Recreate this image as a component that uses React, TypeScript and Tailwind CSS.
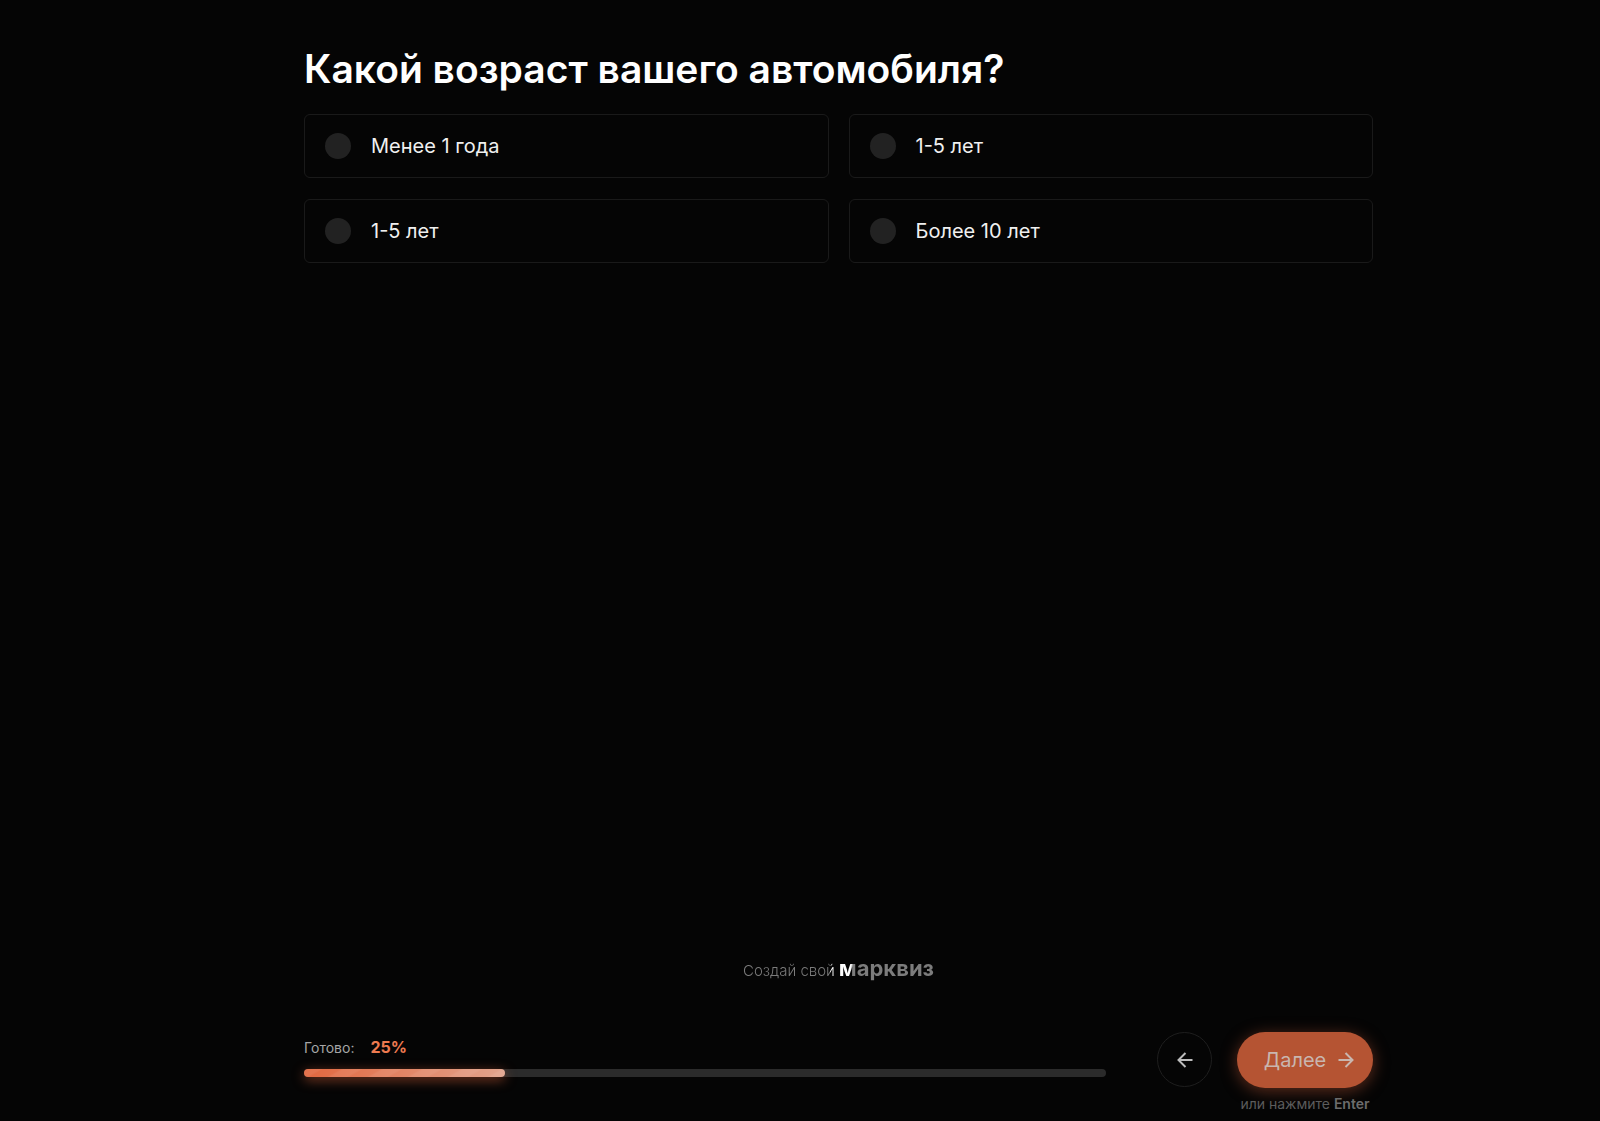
import React, { useState } from 'react';

const options = ['Менее 1 года', '1-5 лет', '1-5 лет', 'Более 10 лет'];

const PROGRESS = 25;

/** One selectable answer: round marker and a caption inside an outlined card. */
const Option: React.FC<{ id: string; text: string; checked: boolean; onSelect: () => void }> = ({ id, text, checked, onSelect }) => (
    <label
        htmlFor={id}
        className="flex h-16 cursor-pointer items-center gap-5 rounded-md border border-[#1a1a1a] px-5 text-xl text-[#f0f0f0]"
    >
        <input
            id={id}
            type="radio"
            name="age"
            checked={checked}
            onChange={onSelect}
            className="size-[26px] shrink-0 cursor-pointer appearance-none rounded-full bg-[#222222] checked:bg-[#ef7b52]"
        />
        <span>{text}</span>
    </label>
);

const App: React.FC = () => {
    const [selected, setSelected] = useState<number | null>(null);

    return (
        <div className="flex min-h-screen flex-col bg-[#050505] pr-[227px] pl-[304px] font-['Inter',sans-serif] text-white">

            {/* Question */}
            <main className="grow pt-11">
                <h1 className="text-[39px] leading-[50px] font-semibold">Какой возраст вашего автомобиля?</h1>
                <div className="mt-5 grid grid-cols-2 gap-x-5 gap-y-[21px]">
                    {options.map((text, i) => (
                        <Option
                            key={i}
                            id={`age-${i}`}
                            text={text}
                            checked={selected === i}
                            onSelect={() => setSelected(i)}
                        />
                    ))}
                </div>
            </main>

            {/* Brand link with a light streak across the letters */}
            <a
                href="#"
                className="flex items-baseline gap-1 self-center bg-[linear-gradient(100deg,#7c7c7c_46%,#ffffff_46%,#ffffff_56%,#7c7c7c_57%)] bg-clip-text leading-8 text-transparent"
            >
                <span className="text-[15px] font-light">Создай свой</span>
                <span className="text-[22px] font-bold">марквиз</span>
            </a>

            {/* Progress and navigation */}
            <footer className="mt-[45px] flex items-start pb-[7px]">
                <div className="grow pt-[3px]">
                    <div className="flex items-baseline gap-4 leading-6">
                        <span id="progress-label" className="text-sm text-[#a6a6a6]">Готово:</span>
                        <span className="text-base font-bold text-[#ee7a50]">{PROGRESS}%</span>
                    </div>
                    <div
                        role="progressbar"
                        aria-labelledby="progress-label"
                        aria-valuenow={PROGRESS}
                        className="mt-[10px] h-2 rounded-full bg-[#2b2b2b]"
                    >
                        <div
                            style={{ width: `${PROGRESS}%` }}
                            className="h-full rounded-full bg-[repeating-linear-gradient(150deg,#ffffff12_0px,#ffffff12_8px,transparent_10px,transparent_18px,#ffffff12_20px),linear-gradient(90deg,#e2673f,#e2a48d)] shadow-[0_3px_12px_#d9633a99]"
                        />
                    </div>
                </div>

                <button
                    type="button"
                    aria-label="Назад"
                    className="ml-[51px] flex size-[55px] shrink-0 items-center justify-center rounded-full border border-[#1e1e1e] text-[#bcbcbc]"
                >
                    <svg width="16" height="16" viewBox="0 0 16 16" fill="none" stroke="currentColor" strokeWidth="2">
                        <path d="M15.5 8H1.5M8.5 1L1.5 8L8.5 15" />
                    </svg>
                </button>

                <div className="ml-[25px] flex shrink-0 flex-col items-center">
                    <button
                        type="button"
                        className="flex h-[56px] w-[136px] items-center justify-center gap-3 rounded-full bg-[#b55433] pl-2 text-xl text-[#c9b6af] shadow-[0_3px_16px_#b5543380]"
                    >
                        Далее
                        <svg width="16" height="16" viewBox="0 0 16 16" fill="none" stroke="currentColor" strokeWidth="2">
                            <path d="M0.5 8H14.5M7.5 1L14.5 8L7.5 15" />
                        </svg>
                    </button>
                    <p className="mt-[6px] text-sm text-[#5c5c5c]">
                        или нажмите <b className="font-semibold text-[#6c6c6c]">Enter</b>
                    </p>
                </div>
            </footer>
        </div>
    );
};

export default App;
